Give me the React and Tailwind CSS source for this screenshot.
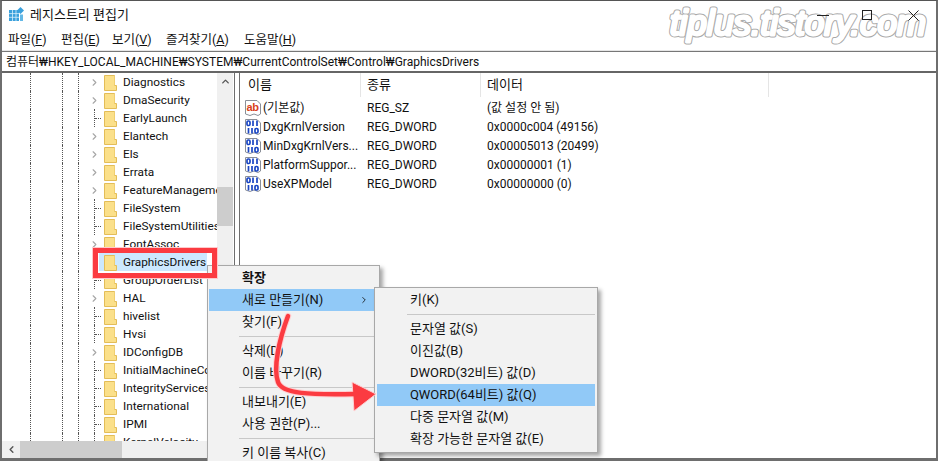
import { ChevronRight, ChevronUp, ChevronLeft } from 'lucide-react';

const treeRows = [
  ['Diagnostics', 1], ['DmaSecurity', 1], ['EarlyLaunch', 0], ['Elantech', 1], ['Els', 1], ['Errata', 1],
  ['FeatureManagement', 1], ['FileSystem', 0], ['FileSystemUtilities', 0], ['FontAssoc', 1],
  ['GraphicsDrivers', 1], ['GroupOrderList', 0], ['HAL', 1], ['hivelist', 0], ['Hvsi', 0],
  ['IDConfigDB', 1], ['InitialMachineConfig', 0], ['IntegrityServices', 0], ['International', 0], ['IPMI', 0], ['KernelVelocity', 0],
];

const values = [
  ['ab', '(기본값)', 'REG_SZ', '(값 설정 안 됨)'],
  ['bin', 'DxgKrnlVersion', 'REG_DWORD', '0x0000c004 (49156)'],
  ['bin', 'MinDxgKrnlVers...', 'REG_DWORD', '0x00005013 (20499)'],
  ['bin', 'PlatformSuppor...', 'REG_DWORD', '0x00000001 (1)'],
  ['bin', 'UseXPModel', 'REG_DWORD', '0x00000000 (0)'],
];

function Folder() {
  return (
    <svg width="13" height="16" viewBox="0 0 13 16" className="shrink-0">
      <path d="M0.5 0.5H10.5V10.5H12.5V15.5H0.5Z" fill="#fbe08a" stroke="#e3bd58" />
      <path d="M10.5 1V10.5" stroke="#f0cf70" />
    </svg>
  );
}

function FileIcon({ kind }) {
  return (
    <svg width="16" height="16" viewBox="0 0 16 16" className="shrink-0">
      <path d="M0.5 0.5H12L15.5 4V14L13 15.5L9 14L5 15.5L0.5 14Z" fill="#fff" stroke="#8a8f98" />
      {kind === 'ab' ? (
        <text x="1.5" y="11" fontSize="11" fontWeight="700" fill="#d8401a" fontFamily="Liberation Sans" textLength="12.5">ab</text>
      ) : (
        <g fill="none" stroke="#1a46c4" strokeWidth="1.7">
          <rect x="2" y="2" width="3" height="4.5" rx="1.2" />
          <path d="M8 1.5V7M12 1.5V7" />
          <path d="M3.5 9V14.5M7 9V14.5" />
          <rect x="10" y="9.5" width="3" height="4.5" rx="1.2" />
        </g>
      )}
    </svg>
  );
}

function AppIcon() {
  return (
    <svg width="16" height="16" viewBox="0 0 16 16">
      <path d="M0 3H10V14H0Z" fill="#3aa0dc" />
      <path d="M3.5 3V14M7 3V14M0 6.6H10M0 10.3H10" stroke="#d8f0fb" strokeWidth="0.8" />
      <path d="M11.5 0L15 3.5L11.5 7L8 3.5Z" fill="#3aa0dc" />
      <path d="M11 7.5H14V14H11Z" fill="#63b8e6" />
    </svg>
  );
}

function Mn({ k, children }) {
  return <span>{children}(<span className="underline">{k}</span>)</span>;
}

function TreeRow({ name, expander, selected }) {
  return (
    <div className="flex h-[18px] shrink-0 items-center">
      <div className="h-full w-[28px] shrink-0" />
      <div className="h-full w-[32px] shrink-0 border-l border-dotted border-[#555]" />
      <div className="h-full w-[16px] shrink-0 border-l border-dotted border-[#555]" />
      <div className="h-full w-[16px] shrink-0 border-l border-dotted border-[#555]" />
      <div className="flex h-full w-[10px] shrink-0 items-center">
        {expander ? (
          <ChevronRight size={11} strokeWidth={2.4} className="-ml-[5px] text-[#a6a6a6]" />
        ) : (
          <div className="flex h-full w-[7px] items-center border-l border-dotted border-[#555]">
            <div className="w-full border-t border-dotted border-[#555]" />
          </div>
        )}
      </div>
      <div className={selected ? 'flex h-full w-[108px] shrink-0 items-center -ml-[5px] pt-px pl-[5px] bg-[#cce8ff]' : 'flex h-full min-w-0 flex-1 items-center pt-px'}>
        <Folder />
        <span className="ml-[6px] whitespace-nowrap text-[11.8px] text-[#111]">{name}</span>
      </div>
    </div>
  );
}

function MenuItem({ children, active, bold, arrow }) {
  return (
    <div className={`flex h-[22px] items-center justify-between pr-[9px] pl-[33px] text-[13px] text-[#111] ${active ? 'bg-[#91c9f7]' : ''} ${bold ? 'font-bold' : ''}`}>
      <span className="whitespace-nowrap">{children}</span>
      {arrow && <ChevronRight size={10} strokeWidth={2} />}
    </div>
  );
}

function Sep() {
  return <div className="ml-[30px] flex h-[7px] items-center"><div className="h-px w-full bg-[#c8c8c8]" /></div>;
}

export default function App() {
  return (
    <div className="relative h-[461px] w-[938px] overflow-hidden bg-white [font-family:'Roboto','Noto_Sans_CJK_KR',sans-serif]">
      <div className="flex h-full flex-col border-x-2 border-t border-b-[3px] border-x-[#6e6e6e] border-t-[#555] border-b-[#6e6e6e]">
        {/* title bar */}
        <div className="flex h-[30px] shrink-0 items-center pb-[2px] pl-[7px]">
          <AppIcon />
          <span className="ml-[5px] text-[13px] text-[#111]">레지스트리 편집기</span>
          <div className="relative z-10 ml-auto flex items-center pr-[17px]">
            <div className="h-px w-[12px] bg-[#222]" />
            <div className="ml-[33px] h-[10px] w-[10px] border border-[#222]" />
            <svg width="11" height="11" viewBox="0 0 11 11" className="ml-[36px]"><path d="M0.5 0.5L10.5 10.5M10.5 0.5L0.5 10.5" stroke="#222" /></svg>
          </div>
        </div>
        {/* menu bar */}
        <div className="flex h-[20px] shrink-0 items-center border-b border-[#e6e6e6] pl-[6px] text-[12.5px] text-[#111]">
          <span className="w-[53px]"><Mn k="F">파일</Mn></span>
          <span className="w-[51px]"><Mn k="E">편집</Mn></span>
          <span className="w-[54px]"><Mn k="V">보기</Mn></span>
          <span className="w-[78px]"><Mn k="A">즐겨찾기</Mn></span>
          <span><Mn k="H">도움말</Mn></span>
        </div>
        {/* address bar */}
        <div className="flex h-[22px] shrink-0 items-center border-t border-b-2 border-t-[#777] border-b-[#666] pl-[4px] text-[12px] text-[#111]">
          컴퓨터₩HKEY_LOCAL_MACHINE₩SYSTEM₩CurrentControlSet₩Control₩GraphicsDrivers
        </div>
        {/* panes */}
        <div className="flex min-h-0 flex-1">
          <div className="flex w-[231px] shrink-0 flex-col">
            <div className="flex min-h-0 flex-1">
              <div className="flex min-w-0 flex-1 flex-col overflow-hidden">
                {treeRows.map(([name, expander]) => (
                  <TreeRow key={name} name={name} expander={!!expander} selected={name === 'GraphicsDrivers'} />
                ))}
              </div>
              <div className="flex w-[16px] shrink-0 flex-col bg-[#f0f0f0]">
                <div className="flex h-[17px] items-center justify-center"><ChevronUp size={11} strokeWidth={3} className="text-[#555]" /></div>
                <div className="mt-[97px] h-[39px] w-full bg-[#cdcdcd]" />
              </div>
            </div>
            <div className="flex h-[17px] shrink-0 items-center bg-[#f0f0f0]">
              <div className="flex w-[18px] justify-center"><ChevronLeft size={11} strokeWidth={3} className="text-[#555]" /></div>
              <div className="h-full w-[102px] bg-[#cdcdcd]" />
            </div>
          </div>
          {/* splitter */}
          <div className="ml-px w-[6px] shrink-0 border-x border-[#6e6e6e] bg-white" />
          {/* value list */}
          <div className="min-w-0 flex-1">
            <div className="flex h-[24px] items-center text-[13px] text-[#111]">
              <div className="flex h-full w-[121px] items-center border-r border-[#e5e5e5] pl-[8px]">이름</div>
              <div className="flex h-full w-[120px] items-center border-r border-[#e5e5e5] pl-[6px]">종류</div>
              <div className="flex h-full w-[288px] items-center border-r border-[#e5e5e5] pl-[6px]">데이터</div>
            </div>
            <div className="pt-[1px]">
              {values.map(([kind, name, type, data]) => (
                <div key={name} className="grid h-[19px] grid-cols-[127px_120px_1fr] items-center text-[12px] text-[#111]">
                  <div className="flex items-center gap-[2px] pl-[5px] whitespace-nowrap"><FileIcon kind={kind} />{name}</div>
                  <div>{type}</div>
                  <div>{data}</div>
                </div>
              ))}
            </div>
          </div>
        </div>
      </div>

      {/* watermark */}
      <svg className="absolute top-0 left-[664px]" width="272" height="50" viewBox="0 0 272 50">
        <g fontFamily="Liberation Sans" fontStyle="italic" fontSize="35">
          <text x="6" y="35" fill="#a8a8a8" stroke="#a8a8a8" strokeWidth="5" strokeLinejoin="round" textLength="256" aria-hidden="true">tiplus.tistory.com</text>
          <text x="6" y="35" fill="#fff" stroke="#fff" strokeWidth="3" strokeLinejoin="round" textLength="256">tiplus.tistory.com</text>
        </g>
      </svg>

      {/* context menu */}
      <div className="absolute top-[265px] left-[207px] h-[210px] w-[173px] border border-[#a8a8a8] bg-[#f2f2f2] px-px py-px shadow-[3px_3px_4px_rgba(0,0,0,0.35)]">
        <MenuItem bold>확장</MenuItem>
        <MenuItem active arrow>새로 만들기(N)</MenuItem>
        <MenuItem>찾기(F)</MenuItem>
        <Sep />
        <MenuItem>삭제(D)</MenuItem>
        <MenuItem>이름 바꾸기(R)</MenuItem>
        <Sep />
        <MenuItem>내보내기(E)</MenuItem>
        <MenuItem>사용 권한(P)...</MenuItem>
        <Sep />
        <MenuItem>키 이름 복사(C)</MenuItem>
      </div>

      {/* submenu */}
      <div className="absolute top-[287px] left-[374px] h-[166px] w-[224px] border border-[#a8a8a8] bg-[#f2f2f2] px-[2px] py-px shadow-[3px_3px_4px_rgba(0,0,0,0.35)]">
        <MenuItem>키(K)</MenuItem>
        <Sep />
        <MenuItem>문자열 값(S)</MenuItem>
        <MenuItem>이진값(B)</MenuItem>
        <MenuItem>DWORD(32비트) 값(D)</MenuItem>
        <MenuItem active>QWORD(64비트) 값(Q)</MenuItem>
        <MenuItem>다중 문자열 값(M)</MenuItem>
        <MenuItem>확장 가능한 문자열 값(E)</MenuItem>
      </div>

      {/* red highlight box */}
      <div className="absolute top-[248px] left-[93px] h-[30px] w-[124px] border-[5px] border-[#fb3b41] shadow-[0_0_0_1px_#ffc9cb]" />

      {/* red arrow */}
      <svg className="absolute top-[310px] left-[270px]" width="112" height="105" viewBox="0 0 112 105">
        <path d="M18 6C9 30 3 58 8 72C12 84 40 85 86 84" fill="none" stroke="#ffd0d2" strokeWidth="6.5" strokeLinecap="round" />
        <path d="M82 72L106 84L84 101Z" fill="#fb3b41" stroke="#ffd0d2" strokeWidth="1" />
        <path d="M18 6C9 30 3 58 8 72C12 84 40 85 86 84" fill="none" stroke="#fb3b41" strokeWidth="4.5" strokeLinecap="round" />
      </svg>
    </div>
  );
}
